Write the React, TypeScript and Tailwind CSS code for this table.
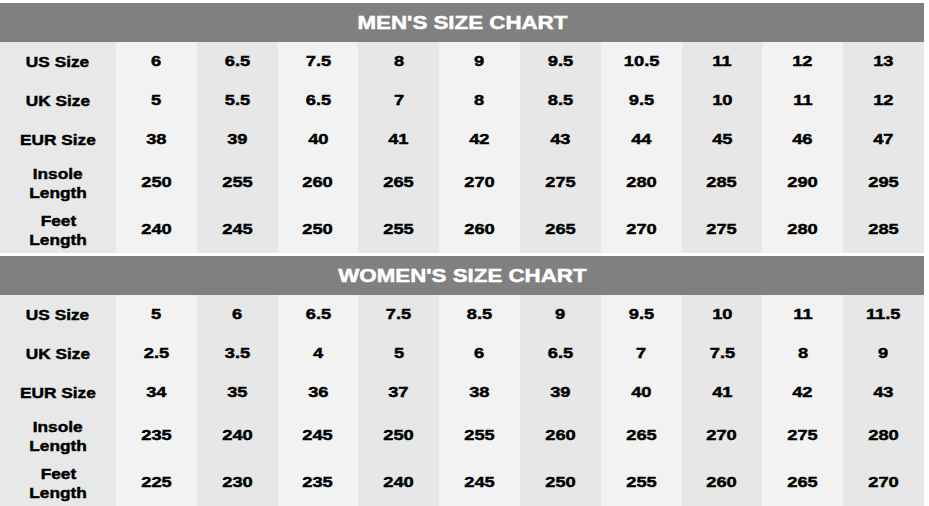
import React from 'react';

const sizeData = [
  {
    title: "MEN'S SIZE CHART",
    rows: [
      { label: ['US Size'], values: ['6', '6.5', '7.5', '8', '9', '9.5', '10.5', '11', '12', '13'] },
      { label: ['UK Size'], values: ['5', '5.5', '6.5', '7', '8', '8.5', '9.5', '10', '11', '12'] },
      { label: ['EUR Size'], values: ['38', '39', '40', '41', '42', '43', '44', '45', '46', '47'] },
      { label: ['Insole', 'Length'], values: ['250', '255', '260', '265', '270', '275', '280', '285', '290', '295'] },
      { label: ['Feet', 'Length'], values: ['240', '245', '250', '255', '260', '265', '270', '275', '280', '285'] },
    ],
  },
  {
    title: "WOMEN'S SIZE CHART",
    rows: [
      { label: ['US Size'], values: ['5', '6', '6.5', '7.5', '8.5', '9', '9.5', '10', '11', '11.5'] },
      { label: ['UK Size'], values: ['2.5', '3.5', '4', '5', '6', '6.5', '7', '7.5', '8', '9'] },
      { label: ['EUR Size'], values: ['34', '35', '36', '37', '38', '39', '40', '41', '42', '43'] },
      { label: ['Insole', 'Length'], values: ['235', '240', '245', '250', '255', '260', '265', '270', '275', '280'] },
      { label: ['Feet', 'Length'], values: ['225', '230', '235', '240', '245', '250', '255', '260', '265', '270'] },
    ],
  },
];

function Chart({ title, rows }: { title: string; rows: { label: string[]; values: string[] }[] }) {
  return (
    <div className="flex flex-col">
      <div className="flex h-[39px] items-center justify-center bg-[#808080]">
        <span className="inline-block scale-x-[1.2] text-[18.6px] font-bold text-white [-webkit-text-stroke:0.5px_white]">
          {title}
        </span>
      </div>
      <div className="grid grid-cols-[116px_repeat(10,1fr)]">
        {/* label column */}
        <div className="flex flex-col bg-[#e8e8e8]">
          {rows.map((r, i) => (
            <div
              key={i}
              className={`flex flex-col items-center justify-center leading-[19px] ${i < 3 ? 'h-[39px]' : 'h-[47px]'}`}
            >
              {r.label.map((l) => (
                <span key={l} className="inline-block scale-x-[1.15] text-[15px] font-bold [-webkit-text-stroke:0.45px_black]">
                  {l}
                </span>
              ))}
            </div>
          ))}
        </div>
        {rows[0].values.map((_, c) => (
          <div key={c} className={`flex flex-col ${c % 2 === 0 ? 'bg-[#f2f2f2]' : 'bg-[#e7e7e7]'}`}>
            {rows.map((r, i) => (
              <div
                key={i}
                className={`flex items-center justify-center ${i < 3 ? 'h-[39px]' : 'h-[47px]'}`}
              >
                <span className="inline-block scale-x-[1.22] text-[15px] font-bold [-webkit-text-stroke:0.45px_black]">
                  {r.values[c]}
                </span>
              </div>
            ))}
          </div>
        ))}
      </div>
    </div>
  );
}

export default function App() {
  return (
    <div className="h-[506px] w-[929px] overflow-hidden bg-white pt-[3px] text-black font-['Liberation_Sans',Arial,sans-serif]">
      <div className="flex w-[924px] flex-col gap-[3px]">
        {sizeData.map((c) => (
          <Chart key={c.title} title={c.title} rows={c.rows} />
        ))}
      </div>
    </div>
  );
}
